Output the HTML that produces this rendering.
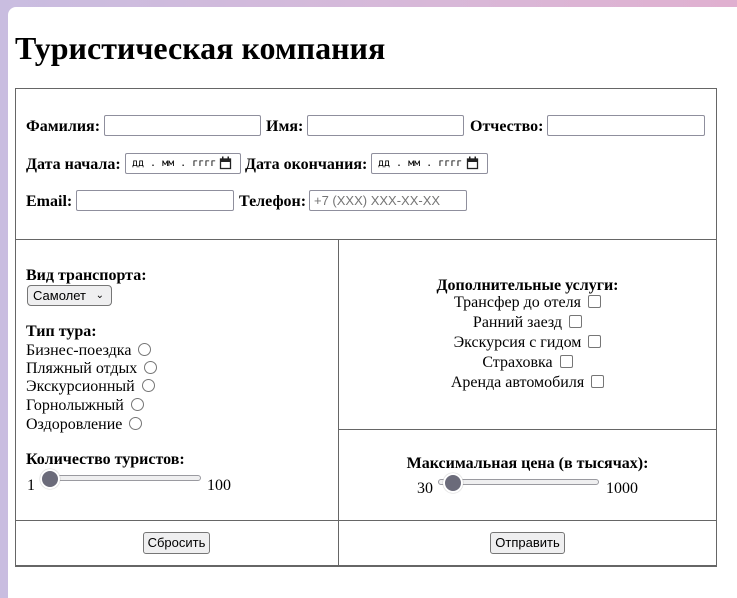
<!DOCTYPE html>
<html><head><meta charset="utf-8"><style>
html,body{margin:0;padding:0;width:737px;height:598px;overflow:hidden;}
body{background:linear-gradient(90deg,#c9bde0 0%,#d8b8d8 60%,#e0b0d0 100%);font-family:"Liberation Serif",serif;font-size:16px;color:#000;position:relative;}
#pg{position:absolute;left:8px;top:7px;right:0;bottom:0;background:#fff;border-top-left-radius:8px;}
.a{position:absolute;white-space:nowrap;line-height:17px;}
.b{font-weight:bold;}
.l{position:absolute;background:#666;}
input[type=text]{position:absolute;box-sizing:border-box;border:1px solid #8f8f9d;border-radius:2px;height:21px;padding:1px 4px;font-family:"Liberation Sans",sans-serif;font-size:13px;margin:0;background:#fff;}
.rad{display:inline-block;vertical-align:-1px;margin-left:7px;width:13px;height:13px;border:1.5px solid #767676;border-radius:50%;box-sizing:border-box;}
.chk{display:inline-block;vertical-align:-1px;margin-left:7px;width:13px;height:13px;border:1.5px solid #767676;border-radius:2px;box-sizing:border-box;}
.btn{position:absolute;box-sizing:border-box;height:22px;border:1px solid #767676;border-radius:3px;background:#efeff0;font-family:"Liberation Sans",sans-serif;font-size:13px;line-height:20px;text-align:center;}
.trk{position:absolute;height:6px;border:1px solid #9a9aa0;border-radius:4px;background:#efeff0;box-sizing:border-box;}
.th{position:absolute;width:16px;height:16px;border-radius:50%;background:#6b6b7a;border:2px solid #fff;box-shadow:0 0 1px #888;box-sizing:content-box;}
.dt{position:absolute;box-sizing:border-box;border:1px solid #8f8f9d;border-radius:2px;height:21px;font-family:"DejaVu Sans Mono",monospace;font-size:10px;line-height:19px;padding-left:6px;}
.rc{position:absolute;left:339px;width:377px;text-align:center;white-space:nowrap;line-height:17px;}
</style></head><body>
<div id="pg"></div>
<div class="a b" style="left:15px;top:29px;font-size:32px;line-height:38px;">Туристическая компания</div>

<div class="l" style="left:15px;top:88px;width:702px;height:1px"></div>
<div class="l" style="left:15px;top:565px;width:702px;height:2px"></div>
<div class="l" style="left:15px;top:88px;width:1px;height:478px"></div>
<div class="l" style="left:716px;top:88px;width:1px;height:478px"></div>
<div class="l" style="left:15px;top:239px;width:702px;height:1px"></div>
<div class="l" style="left:338px;top:239px;width:1px;height:327px"></div>
<div class="l" style="left:338px;top:429px;width:379px;height:1px"></div>
<div class="l" style="left:15px;top:520px;width:702px;height:1px"></div>

<div class="a b" style="left:26px;top:118px">Фамилия:</div>
<input type="text" style="left:104px;top:115px;width:157px">
<div class="a b" style="left:266px;top:118px">Имя:</div>
<input type="text" style="left:307px;top:115px;width:157px">
<div class="a b" style="left:470px;top:118px">Отчество:</div>
<input type="text" style="left:547px;top:115px;width:158px">

<div class="a b" style="left:26px;top:156px">Дата начала:</div>
<div class="dt" style="left:125px;top:153px;width:116px">дд . мм . гггг</div>
<div class="a b" style="left:245px;top:156px">Дата окончания:</div>
<div class="dt" style="left:371px;top:153px;width:117px">дд . мм . гггг</div>
<svg style="position:absolute;left:219px;top:156px" width="13" height="14"><rect x="1.5" y="3" width="10" height="9.5" fill="none" stroke="#222" stroke-width="1.3"/><rect x="1.5" y="3" width="10" height="3" fill="#222"/><rect x="3" y="0.5" width="1.5" height="3" fill="#222"/><rect x="8.5" y="0.5" width="1.5" height="3" fill="#222"/></svg>
<svg style="position:absolute;left:466px;top:156px" width="13" height="14"><rect x="1.5" y="3" width="10" height="9.5" fill="none" stroke="#222" stroke-width="1.3"/><rect x="1.5" y="3" width="10" height="3" fill="#222"/><rect x="3" y="0.5" width="1.5" height="3" fill="#222"/><rect x="8.5" y="0.5" width="1.5" height="3" fill="#222"/></svg>

<div class="a b" style="left:26px;top:193px">Email:</div>
<input type="text" style="left:76px;top:190px;width:158px">
<div class="a b" style="left:239px;top:193px">Телефон:</div>
<input type="text" placeholder="+7 (XXX) XXX-XX-XX" style="left:309px;top:190px;width:158px">

<div class="a b" style="left:26px;top:267px">Вид транспорта:</div>
<div class="btn" style="left:27px;top:285px;width:85px;height:21px;text-align:left;padding-left:5px;border-radius:4px;line-height:19px">Самолет<span style="position:absolute;right:7px;font-size:10px">⌄</span></div>
<div class="a b" style="left:26px;top:323px">Тип тура:</div>
<div class="a" style="left:26px;top:342px">Бизнес-поездка<span class="rad"></span></div>
<div class="a" style="left:26px;top:360px">Пляжный отдых<span class="rad"></span></div>
<div class="a" style="left:26px;top:378px">Экскурсионный<span class="rad"></span></div>
<div class="a" style="left:26px;top:397px">Горнолыжный<span class="rad"></span></div>
<div class="a" style="left:26px;top:416px">Оздоровление<span class="rad"></span></div>

<div class="a b" style="left:26px;top:451px">Количество туристов:</div>
<div class="a" style="left:27px;top:477px">1</div>
<div class="trk" style="left:40px;top:475px;width:161px"></div>
<div class="th" style="left:40px;top:469px"></div>
<div class="a" style="left:207px;top:477px">100</div>

<div class="rc b" style="top:277px">Дополнительные услуги:</div>
<div class="rc" style="top:294px">Трансфер до отеля<span class="chk"></span></div>
<div class="rc" style="top:314px">Ранний заезд<span class="chk"></span></div>
<div class="rc" style="top:334px">Экскурсия с гидом<span class="chk"></span></div>
<div class="rc" style="top:354px">Страховка<span class="chk"></span></div>
<div class="rc" style="top:374px">Аренда автомобиля<span class="chk"></span></div>

<div class="rc b" style="top:455px">Максимальная цена (в тысячах):</div>
<div class="a" style="left:417px;top:480px">30</div>
<div class="trk" style="left:438px;top:479px;width:161px"></div>
<div class="th" style="left:443px;top:473px"></div>
<div class="a" style="left:606px;top:480px">1000</div>

<div class="btn" style="left:143px;top:532px;width:67px">Сбросить</div>
<div class="btn" style="left:490px;top:532px;width:75px">Отправить</div>
</body></html>
